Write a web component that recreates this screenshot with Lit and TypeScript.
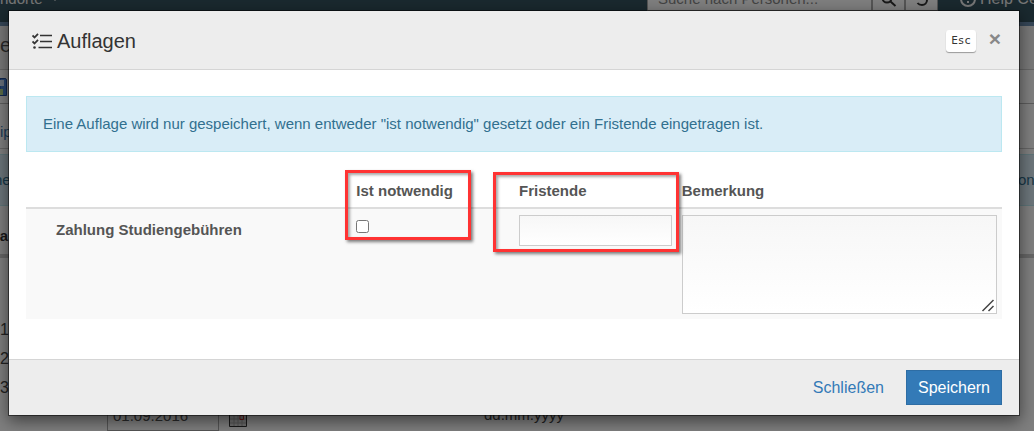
import { LitElement, html, css } from "lit";
import { customElement } from "lit/decorators.js";

@customElement("page-backdrop")
class PageBackdrop extends LitElement {
  static styles = css`
    :host {
      display: block;
      height: 100%;
      overflow: hidden;
      background: #fff;
      color: #444;
      font: 15px/20px "Liberation Sans", Arial, sans-serif;
      white-space: nowrap;
    }
    .nav {
      display: flex;
      align-items: flex-start;
      height: 22px;
      background: #35525f;
      border-bottom: 4px solid #6d8fb0;
      color: #eee;
    }
    .nav-item { margin-top: -11px; display: flex; align-items: center; gap: 8px; }
    .caret { border: 4px solid transparent; border-top-color: #eee; border-bottom: 0; }
    .search { display: flex; margin: -20px 0 0 auto; height: 31px; }
    .search input, .search button {
      box-sizing: border-box;
      height: 31px;
      border: 1px solid #aaa;
      background: #fff;
      font: inherit;
      padding: 6px 10px 0;
    }
    .search input { width: 225px; }
    .search input::placeholder { color: #888; }
    .search button { width: 33px; display: grid; place-items: center; padding: 10px 0 0; }
    .help { width: 74px; margin-left: 22px; overflow: hidden; gap: 4px; font-size: 16px; }
    .help svg { flex: none; }
    .title { height: 44px; box-sizing: border-box; padding-bottom: 6px; border-bottom: 1px solid #ccc; display: flex; align-items: center; font-size: 20px; color: #555; background: #f3f3f3; }
    .tools { height: 33px; border-bottom: 1px solid #bbb; display: flex; align-items: center; }
    .crumbs { height: 44px; line-height: 56px; border-bottom: 1px solid #ccc; color: #3a78b0; margin-bottom: 5px; overflow: hidden; }
    .info {
      display: flex;
      justify-content: space-between;
      align-items: center;
      height: 50px;
      background: #d9edf7;
      border: solid #bce8f1;
      border-width: 1px 0;
      color: #31708f;
    }
    .info-start, .head span { margin-left: -6px; }
    .info-end { width: 16px; }
    .head { display: flex; align-items: center; height: 47px; padding-top: 1px; border-bottom: 4px solid #ccc; font-weight: bold; color: #333; }
    .head span { padding-top: 10px; }
    .rows { padding: 57px 0 2px; line-height: 29px; font-size: 16px; }
    .rows div { height: 29px; }
    .fields { display: flex; align-items: flex-start; padding-left: 107px; gap: 10px; }
    .fields input { width: 112px; height: 27px; box-sizing: border-box; border: 1px solid #aaa; padding: 0 5px 4px; font: 15px "Liberation Sans", Arial, sans-serif; color: #555; background: #fff; }
    .hint { margin-left: 227px; line-height: 22px; }
  `;
  render() {
    return html`
      <div class="nav">
        <div class="nav-item">ndorte <span class="caret"></span></div>
        <div class="search">
          <input aria-label="Suche" placeholder="Suche nach Personen..." />
          <button aria-label="Suchen">
            <svg width="16" height="16" viewBox="0 0 16 16" fill="none" stroke="#333" stroke-width="2"><circle cx="6" cy="5" r="4.5" /><path d="M9.500 8.500 14.500 13" /></svg>
          </button>
          <button aria-label="Zurücksetzen">
            <svg width="16" height="16" viewBox="0 0 16 16" fill="none" stroke="#333" stroke-width="2"><path d="M4 2H8A5 5 0 0 1 8 12Q5 12 3.500 10" /></svg>
          </button>
        </div>
        <div class="nav-item help">
          <svg width="16" height="16" viewBox="0 0 16 16" fill="none" stroke="#eee" stroke-width="2"><circle cx="8" cy="8" r="7" /><path d="M8 4v5M8 10v2" /></svg>
          Help Center
        </div>
      </div>
      <div class="title">e</div>
      <div class="tools">
        <svg width="7" height="18" viewBox="0 0 7 18"><path d="M0 .5H5Q6.500 .5 6.500 2V17.500H0Z" fill="#4d86d8" stroke="#234f9c" /><path d="M0 2H4V8H0Z" fill="#cfe0f7" /><path d="M0 11H3V17H0Z" fill="#b7d68c" /></svg>
      </div>
      <div class="crumbs">ip</div>
      <div class="info"><span class="info-start">ne</span><span class="info-end">one</span></div>
      <div class="head"><span>ra</span></div>
      <div class="rows"><div>1</div><div>2</div><div>3</div></div>
      <div class="fields">
        <input aria-label="Datum" value="01.09.2016" />
        <svg width="18" height="24" viewBox="0 0 18 24"><path d="M.5 .5H17.500V22.500H.5Z" fill="#ddd" stroke="#333" /><path d="M5 7V22M9 7V22M13 7V22M1 11H17M1 15H17M1 19H17" stroke="#aaa" fill="none" /><path d="M11 11.500H14.500V15.500H11Z" stroke="#b33" fill="none" /></svg>
        <span class="hint">dd.mm.yyyy</span>
      </div>
    `;
  }
}

@customElement("conditions-dialog")
class ConditionsDialog extends LitElement {
  static styles = css`
    :host {
      display: block;
      box-sizing: border-box;
      border: 1px solid rgba(0, 0, 0, 0.5);
      background: #fff;
      background-clip: padding-box;
      box-shadow: 0 5px 15px rgba(0, 0, 0, 0.5);
      color: #555;
      font: 15px/22px "Liberation Sans", Arial, sans-serif;
    }
    header {
      display: flex;
      align-items: center;
      padding: 15px 17px 14px 23px;
      border-bottom: 1px solid #d5d5d5;
      background: #ededed;
    }
    h1 { display: flex; align-items: center; gap: 5px; margin: 0 auto 0 0; padding-top: 1px; font: 20px/28px "Liberation Sans", Arial, sans-serif; color: #333; }
    kbd {
      padding: 0 5px;
      border-radius: 3px;
      background: #fff;
      box-shadow: 0 1px 1px rgba(0, 0, 0, 0.35);
      color: #333;
      font: 11px/22px "DejaVu Sans Mono", monospace;
    }
    .close { margin-left: 12px; padding: 0 0 4px; width: 14px; border: 0; background: none; color: #888; font: bold 21px/22px "Liberation Sans", Arial, sans-serif; }
    .body { padding: 26px 17px 40px; }
    .alert { margin: 0 0 23px; padding: 16px; border: 1px solid #bce8f1; background: #d9edf7; color: #31708f; }
    table { width: 100%; table-layout: fixed; border-collapse: separate; border-spacing: 0; text-align: left; }
    th, td { box-sizing: border-box; position: relative; padding: 5px; vertical-align: top; }
    thead th { border-bottom: 2px solid #ddd; }
    tbody th, tbody td { background: #f9f9f9; padding-top: 6px; }
    tbody th { padding: 10px 5px 5px 30px; }
    .wide { width: 33.33%; }
    input[type="checkbox"] { display: block; width: 13px; height: 13px; margin: 5px 0 0; }
    .field {
      display: block;
      box-sizing: border-box;
      width: 100%;
      margin: 0;
      border: 1px solid #ccc;
      border-radius: 0;
      background: linear-gradient(#f7f7f7, #fff);
      font: inherit;
      color: inherit;
    }
    input.field { height: 31px; }
    textarea.field { height: 99px; resize: both; }
    textarea.field::-webkit-resizer {
      background: url("data:image/svg+xml,%3Csvg xmlns='http://www.w3.org/2000/svg' width='15' height='15'%3E%3Cpath d='M1.500 13 12.500 2M7.500 13 12.500 8' stroke='%23444' stroke-width='1.500'/%3E%3C/svg%3E") no-repeat;
    }
    .mark {
      position: absolute;
      z-index: 1;
      box-sizing: border-box;
      border: 3px solid #f33;
      box-shadow: 2px 2px 3px rgba(0, 0, 0, 0.5), inset 2px 2px 3px rgba(0, 0, 0, 0.35);
      pointer-events: none;
    }
    .mark-check { left: -6px; top: -5px; width: 126px; height: 70px; }
    .mark-date { left: -21px; right: -2px; top: -3px; height: 80px; }
    footer {
      display: flex;
      justify-content: flex-end;
      gap: 10px;
      padding: 10px 17px;
      border-top: 1px solid #d5d5d5;
      background: #ededed;
    }
    footer button { height: 35px; padding: 0 11px; border: 1px solid transparent; background: none; color: #337ab7; font: 16px "Liberation Sans", Arial, sans-serif; }
    footer .primary { border-color: #2e6da4; background: #337ab7; color: #fff; }
  `;
  render() {
    return html`
      <header>
        <h1>
          <svg width="20" height="17" viewBox="0 0 20 17" fill="none" stroke="#333" stroke-width="1.500">
            <path d="M8 2.500H20M8 8.500H20M6.500 14.500H20" />
            <path d="M.5 2.500 2.500 4.500 6 .8M.5 8.500 2.500 10.500 6 6.800" stroke-width="1.800" />
            <circle cx="2.500" cy="14.500" r="1.300" fill="#333" stroke="none" />
          </svg>
          Auflagen
        </h1>
        <kbd>Esc</kbd>
        <button class="close" aria-label="Dialog schließen">×</button>
      </header>
      <div class="body">
        <p class="alert">Eine Auflage wird nur gespeichert, wenn entweder "ist notwendig" gesetzt oder ein Fristende eingetragen ist.</p>
        <table>
          <thead>
            <tr>
              <th class="wide"></th>
              <th id="need">Ist notwendig<span class="mark mark-check"></span></th>
              <th id="due">Fristende<span class="mark mark-date"></span></th>
              <th class="wide" id="note">Bemerkung</th>
            </tr>
          </thead>
          <tbody>
            <tr>
              <th scope="row">Zahlung Studiengebühren</th>
              <td><input type="checkbox" aria-labelledby="need" /></td>
              <td><input type="text" class="field" aria-labelledby="due" /></td>
              <td><textarea class="field" aria-labelledby="note"></textarea></td>
            </tr>
          </tbody>
        </table>
      </div>
      <footer>
        <button>Schließen</button>
        <button class="primary">Speichern</button>
      </footer>
    `;
  }
}

@customElement("app-root")
class AppRoot extends LitElement {
  static styles = css`
    :host { display: block; position: relative; height: 100vh; overflow: hidden; }
    .overlay { position: absolute; inset: 0; z-index: 1; padding: 10px 14px 0 8px; background: rgba(0, 0, 0, 0.5); }
  `;
  render() {
    return html`
      <page-backdrop></page-backdrop>
      <div class="overlay"><conditions-dialog role="dialog" aria-label="Auflagen"></conditions-dialog></div>
    `;
  }
}
